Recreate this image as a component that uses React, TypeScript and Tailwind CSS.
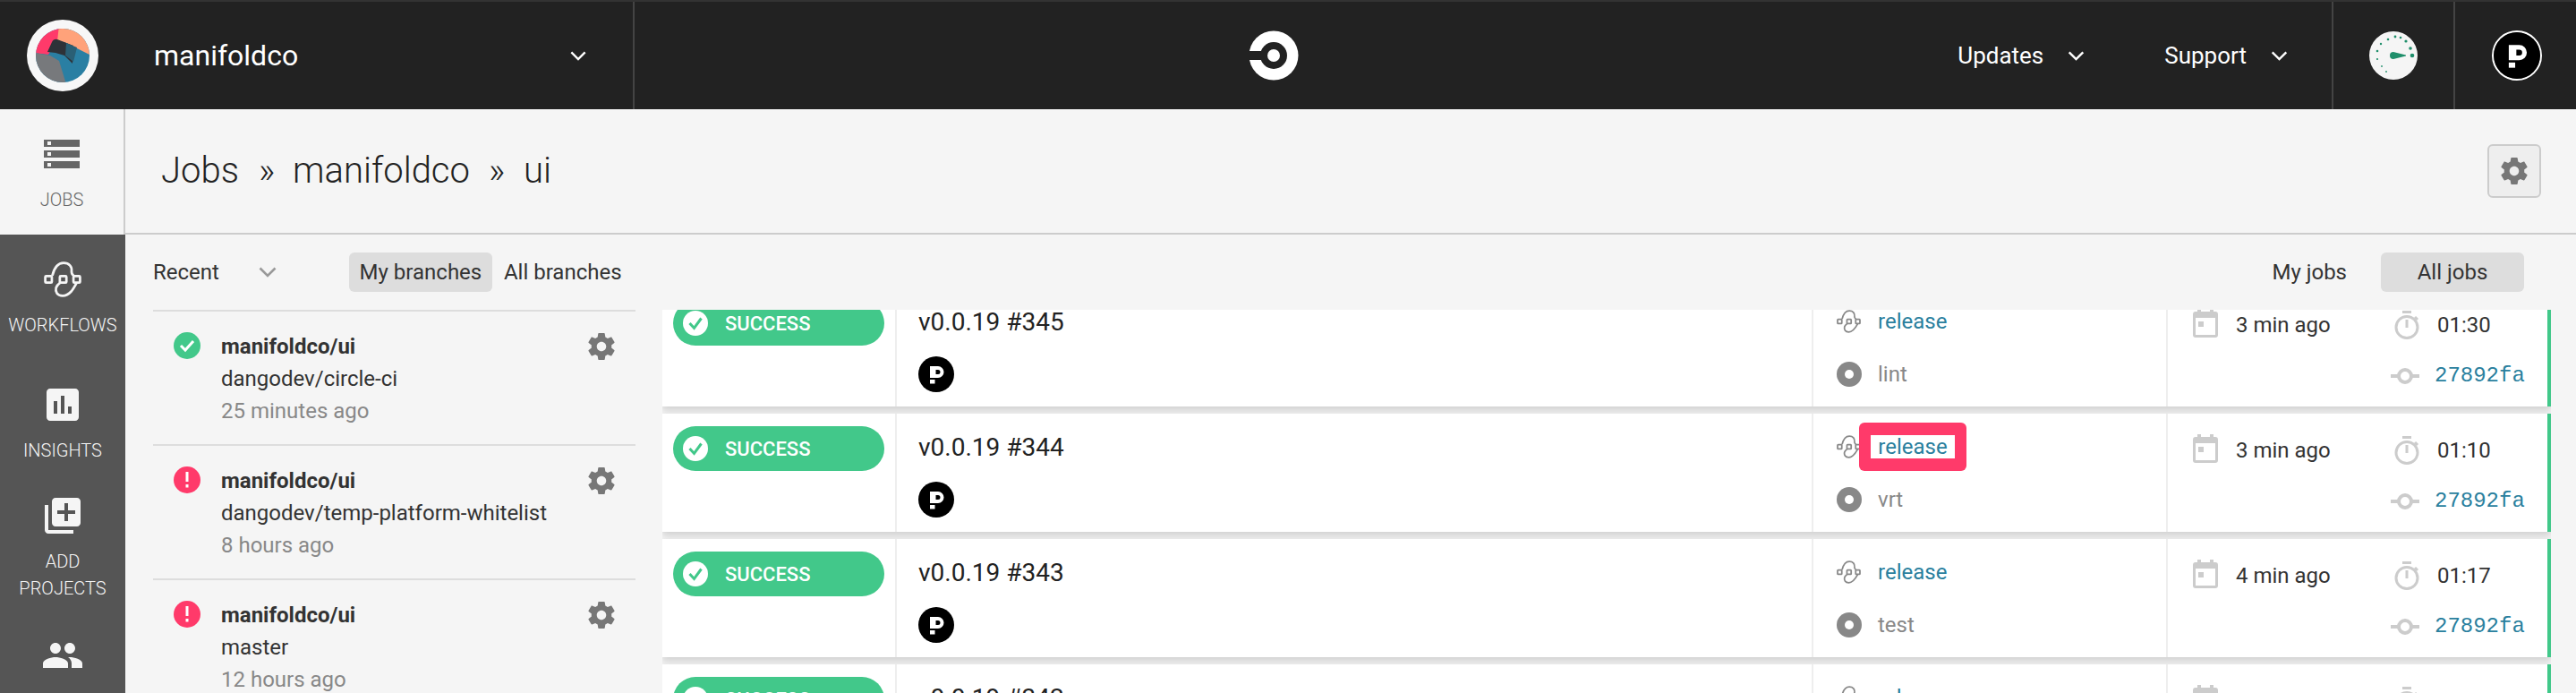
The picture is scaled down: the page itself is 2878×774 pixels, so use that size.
import type { ReactNode } from "react"

const GEAR =
  "M19.43 12.98c.04-.32.07-.64.07-.98s-.03-.66-.07-.98l2.11-1.65c.19-.15.24-.42.12-.64l-2-3.46c-.12-.22-.39-.3-.61-.22l-2.49 1c-.52-.4-1.08-.73-1.69-.98l-.38-2.65C14.46 2.18 14.25 2 14 2h-4c-.25 0-.46.18-.49.42l-.38 2.65c-.61.25-1.17.59-1.69.98l-2.49-1c-.23-.09-.49 0-.61.22l-2 3.46c-.13.22-.07.49.12.64l2.11 1.65c-.04.32-.07.65-.07.98s.03.66.07.98l-2.11 1.65c-.19.15-.24.42-.12.64l2 3.46c.12.22.39.3.61.22l2.49-1c.52.4 1.08.73 1.69.98l.38 2.65c.03.24.24.42.49.42h4c.25 0 .46-.18.49-.42l.38-2.65c.61-.25 1.17-.59 1.69-.98l2.49 1c.23.09.49 0 .61-.22l2-3.46c.12-.22.07-.49-.12-.64l-2.11-1.65zM12 15.5c-1.93 0-3.5-1.57-3.5-3.5s1.57-3.5 3.5-3.5 3.5 1.57 3.5 3.5-1.57 3.5-3.5 3.5z"

function MaterialIcon({ d, className }: { d: string; className?: string }) {
  return (
    <svg viewBox="0 0 24 24" fill="currentColor" className={className}>
      <path d={d} />
    </svg>
  )
}

function Chevron({ className }: { className?: string }) {
  return (
    <svg viewBox="0 0 20 12" fill="none" stroke="currentColor" strokeWidth="2.6" className={className}>
      <path d="M1.5 1.5 10 10l8.5-8.5" />
    </svg>
  )
}

function WorkflowIcon({ className }: { className?: string }) {
  return (
    <svg viewBox="0 0 40 38" fill="none" stroke="currentColor" strokeWidth="2.6" className={className}>
      <path d="M9 15c1.500-6 5-13.500 12-13.500 6 0 9 4 8.500 8.500-.3 2 .5 4 2.500 5.500" />
      <path d="M35 22.500c-3 5.500-7 14-15 14-6 0-8-4.500-7-8.500.7-2.500 2.500-4 4.500-5.500" />
      <rect x="1.500" y="15.500" width="7" height="7" rx="1" />
      <rect x="17" y="15.500" width="7" height="7" rx="1" />
      <rect x="31.500" y="15.500" width="7" height="7" rx="1" />
    </svg>
  )
}

function Avatar({ className }: { className?: string }) {
  return (
    <svg viewBox="0 0 40 40" className={className}>
      <circle cx="20" cy="20" r="20" fill="#000" />
      <path
        fillRule="evenodd"
        fill="#fff"
        d="M13 11h9a6.500 6.500 0 0 1 0 13h-9zM19.500 15v5h2.500a2.500 2.500 0 0 0 0-5z"
      />
      <rect x="13" y="26" width="5.500" height="4.500" fill="#fff" />
    </svg>
  )
}

function SideItem({
  icon,
  label,
  className,
  labelClass,
}: {
  icon: ReactNode
  label: ReactNode
  className: string
  labelClass: string
}) {
  return (
    <div className={className}>
      {icon}
      <div className={labelClass}>{label}</div>
    </div>
  )
}

function TopBar() {
  return (
    <header className="flex h-[122px] items-stretch border-t-2 border-[#333] bg-[#222] text-white">
      <div className="flex w-[140px] items-center justify-center">
        <svg viewBox="0 0 80 80" className="h-[80px] w-[80px]">
          <defs>
            <clipPath id="org">
              <circle cx="40" cy="40" r="30" />
            </clipPath>
          </defs>
          <circle cx="40" cy="40" r="40" fill="#f7f7f7" />
          <g clipPath="url(#org)">
            <rect width="80" height="80" fill="#2a7fa3" />
            <path d="M8 8h34v14L27 34l-3 5-16-2z" fill="#ff3a6a" />
            <path d="M36 6h40v36L42 25l-8-1z" fill="#ffa27a" />
            <path d="M8 37l18 3 10 6 8 26H8z" fill="#77797c" />
            <path d="M28 25q2-4 6-3l18 7-1 20-9-9-10-3-9-1z" fill="#2e3238" />
            <path d="M44 26l12 5-4 16-9-7z" fill="#2a5f75" />
          </g>
        </svg>
      </div>
      <div className="flex w-[569px] items-center justify-between border-r-2 border-[#444] pl-[32px] pr-[52px]">
        <span className="text-[32px] font-normal">manifoldco</span>
        <Chevron className="h-[11px] w-[18px]" />
      </div>
      <div className="flex flex-1 items-center">
        <div className="ml-[686px]">
          <svg viewBox="0 0 56 56" className="h-[56px] w-[56px]">
            <circle cx="28" cy="28" r="27.500" fill="#fff" />
            <rect x="0" y="23" width="16" height="10" fill="#222" />
            <circle cx="28" cy="28" r="15" fill="#222" />
            <circle cx="28" cy="28" r="7" fill="#fff" />
          </svg>
        </div>
        <div className="ml-auto flex items-center pr-[49px] text-[26px]">
          <span>Updates</span>
          <Chevron className="ml-[27px] h-[11px] w-[19px]" />
          <span className="ml-[89px]">Support</span>
          <Chevron className="ml-[27px] h-[11px] w-[19px]" />
        </div>
      </div>
      <div className="flex w-[138px] items-center justify-center border-x-2 border-[#444]">
        <svg viewBox="0 0 54 54" className="h-[54px] w-[54px]">
          <circle cx="27" cy="27" r="27" fill="#f5f5f5" />
          <g fill="#1f8f6b">
            <circle cx="9" cy="22" r="1.300" />
            <circle cx="9" cy="31" r="1.100" />
            <circle cx="13" cy="14" r="1.200" />
            <circle cx="21" cy="9" r="1.300" />
            <circle cx="29" cy="6" r="1.400" />
            <circle cx="35" cy="7" r="1.300" />
            <circle cx="41" cy="11" r="1.600" />
            <circle cx="46" cy="19" r="1.800" />
            <circle cx="48" cy="27" r="2.300" />
            <circle cx="14" cy="39" r="0.900" />
            <circle cx="19" cy="45" r="0.900" />
            <path d="M27 23a4 4 0 0 0 0 8l14-3.500v-1z" />
          </g>
        </svg>
      </div>
      <div className="flex w-[135px] items-center justify-center pl-[2px]">
        <Avatar className="h-[56px] w-[56px] rounded-full border-2 border-white" />
      </div>
    </header>
  )
}

function Sidebar() {
  return (
    <aside className="flex h-[652px] w-[140px] shrink-0 flex-col bg-[#555]">
      <div className="flex h-[140px] flex-col items-center border-r-2 border-[#ccc] bg-[#f5f5f5] pt-[26px]">
        <SideItem
          className="flex flex-col items-center text-[#666]"
          labelClass="mt-[12px] text-center text-[20px] leading-[30px] font-light"
          label="JOBS"
          icon={
            <MaterialIcon
              className="h-[48px] w-[48px]"
              d="M2 20h20v-4H2v4zm2-3h2v2H4v-2zM2 4v4h20V4H2zm4 3H4V5h2v2zm-4 7h20v-4H2v4zm2-3h2v2H4v-2z"
            />
          }
        />
      </div>
      <div className="flex flex-col items-center pt-[30px] text-[#f5f5f5]">
        <SideItem
          className="flex flex-col items-center"
          labelClass="mt-[16px] text-center text-[20px] leading-[30px] font-light"
          label="WORKFLOWS"
          icon={<WorkflowIcon className="h-[40px] w-[42px]" />}
        />
        <SideItem
          className="mt-[50px] flex flex-col items-center"
          labelClass="mt-[12px] text-center text-[20px] leading-[30px] font-light"
          label="INSIGHTS"
          icon={
            <MaterialIcon
              className="h-[48px] w-[48px]"
              d="M19 3H5c-1.100 0-2 .9-2 2v14c0 1.100.9 2 2 2h14c1.100 0 2-.9 2-2V5c0-1.100-.9-2-2-2zM9 17H7v-7h2v7zm4 0h-2V7h2v10zm4 0h-2v-4h2v4z"
            />
          }
        />
        <SideItem
          className="mt-[34px] flex flex-col items-center"
          labelClass="mt-[12px] text-center text-[20px] leading-[30px] font-light"
          label={
            <>
              ADD
              <br />
              PROJECTS
            </>
          }
          icon={
            <MaterialIcon
              className="h-[48px] w-[48px]"
              d="M4 6H2v14c0 1.100.9 2 2 2h14v-2H4V6zm16-4H8c-1.100 0-2 .9-2 2v12c0 1.100.9 2 2 2h12c1.100 0 2-.9 2-2V4c0-1.100-.9-2-2-2zm-1 9h-4v4h-2v-4H9V9h4V5h2v4h4v2z"
            />
          }
        />
        <MaterialIcon
          className="mt-[36px] h-[48px] w-[48px]"
          d="M16 11c1.660 0 2.990-1.340 2.990-3S17.660 5 16 5c-1.660 0-3 1.340-3 3s1.340 3 3 3zm-8 0c1.660 0 2.990-1.340 2.990-3S9.660 5 8 5C6.340 5 5 6.340 5 8s1.340 3 3 3zm0 2c-2.330 0-7 1.170-7 3.500V19h14v-2.500c0-2.330-4.670-3.500-7-3.500zm8 0c-.29 0-.62.02-.97.05 1.160.84 1.970 1.970 1.970 3.450V19h6v-2.500c0-2.330-4.670-3.500-7-3.500z"
        />
      </div>
    </aside>
  )
}

const branches = [
  { ok: true, branch: "dangodev/circle-ci", time: "25 minutes ago" },
  { ok: false, branch: "dangodev/temp-platform-whitelist", time: "8 hours ago" },
  { ok: false, branch: "master", time: "12 hours ago" },
]

function BranchPanel() {
  return (
    <div className="w-[600px] shrink-0 pl-[31px] pr-[30px]">
      <div className="flex h-[86px] items-center border-b-2 border-[#ddd] text-[24px] text-[#333]">
        <span>Recent</span>
        <Chevron className="ml-[43px] h-[12px] w-[22px] text-[#999]" />
        <span className="ml-[80px] flex h-[44px] w-[160px] items-center justify-center rounded-[6px] bg-[#ddd]">My branches</span>
        <span className="ml-[13px]">All branches</span>
      </div>
      {branches.map((b) => (
        <div key={b.branch} className="flex h-[150px] border-b-2 border-[#ddd] pl-[23px] pr-[20px] pt-[21px]">
          {b.ok ? (
            <svg viewBox="0 0 30 30" className="mt-[2px] h-[30px] w-[30px] shrink-0">
              <circle cx="15" cy="15" r="15" fill="#42c88a" />
              <path d="M8 15l5 5 9-10" fill="none" stroke="#fff" strokeWidth="3" />
            </svg>
          ) : (
            <svg viewBox="0 0 30 30" className="mt-[2px] h-[30px] w-[30px] shrink-0">
              <circle cx="15" cy="15" r="15" fill="#ff3a6a" />
              <rect x="13.500" y="6" width="3" height="11" fill="#fff" />
              <rect x="13.500" y="20" width="3" height="3.500" fill="#fff" />
            </svg>
          )}
          <div className="ml-[23px] flex-1 text-[24px] leading-[36px] text-[#333]">
            <div className="font-bold">manifoldco/ui</div>
            <div>{b.branch}</div>
            <div className="text-[#888]">{b.time}</div>
          </div>
          <MaterialIcon className="h-[36px] w-[36px] shrink-0 text-[#777]" d={GEAR} />
        </div>
      ))}
    </div>
  )
}

const jobs = [
  { build: "v0.0.19 #345", step: "lint", ago: "3 min ago", dur: "01:30" },
  { build: "v0.0.19 #344", step: "vrt", ago: "3 min ago", dur: "01:10", marked: true },
  { build: "v0.0.19 #343", step: "test", ago: "4 min ago", dur: "01:17" },
  { build: "v0.0.19 #342", step: "test", ago: "4 min ago", dur: "00:55" },
]

function JobRow({ job }: { job: (typeof jobs)[number] }) {
  return (
    <div className="flex h-[132px] shrink-0 border-r-4 border-[#42c88a] bg-white text-[24px] shadow-[0_4px_8px_rgba(0,0,0,0.16)]">
      <div className="w-[262px] shrink-0 border-r-2 border-[#eee] pl-[12px] pt-[14px]">
        <div className="flex h-[50px] w-[236px] items-center rounded-full bg-[#42c88a] pl-[11px] text-white">
          <svg viewBox="0 0 28 28" className="h-[28px] w-[28px]">
            <circle cx="14" cy="14" r="14" fill="#fff" />
            <path d="M7.500 14l5 5.500 8-11" fill="none" stroke="#42c88a" strokeWidth="3" />
          </svg>
          <span className="ml-[19px] text-[22px] font-medium">SUCCESS</span>
        </div>
      </div>
      <div className="w-[1024px] shrink-0 border-r-2 border-[#eee] pl-[24px] pt-[16px] text-[#222]">
        <div className="text-[28px] leading-[44px]">{job.build}</div>
        <Avatar className="mt-[16px] h-[40px] w-[40px]" />
      </div>
      <div className="w-[396px] shrink-0 border-r-2 border-[#eee] pl-[26px] pt-[24px]">
        <div className="flex h-[26px] items-center">
          <WorkflowIcon className="h-[26px] w-[27px] text-[#888]" />
          {job.marked ? (
            <span className="ml-[-2px] rounded-[6px] bg-[#ff3a6a] px-[13px] py-[14px] leading-none">
              <span className="flex h-[26px] w-[94px] items-center justify-center bg-white text-[#2a7f9e]">release</span>
            </span>
          ) : (
            <span className="ml-[19px] text-[#2a7f9e]">release</span>
          )}
        </div>
        <div className="mt-[32px] flex h-[28px] items-center text-[#888]">
          <svg viewBox="0 0 28 28" className="h-[28px] w-[28px]">
            <circle cx="14" cy="14" r="14" fill="#888" />
            <circle cx="14" cy="14" r="5" fill="#fff" />
          </svg>
          <span className="ml-[18px]">{job.step}</span>
        </div>
      </div>
      <div className="flex w-[253px] shrink-0 items-start pl-[28px] pt-[23px] text-[#333]">
        <svg viewBox="0 0 28 32" fill="#ccc" className="h-[32px] w-[28px]">
          <path
            fillRule="evenodd"
            d="M5 0h4v3h10V0h4v3h2a3 3 0 0 1 3 3v23a3 3 0 0 1-3 3H3a3 3 0 0 1-3-3V6a3 3 0 0 1 3-3h2zM3 10v19h22V10zM6 14h6v6H6z"
          />
        </svg>
        <span className="ml-[20px] leading-[36px]">{job.ago}</span>
      </div>
      <div className="flex-1 pt-[23px] text-[#333]">
        <div className="flex items-center">
          <svg viewBox="0 0 28 32" fill="none" stroke="#ccc" strokeWidth="3" className="h-[32px] w-[28px]">
            <circle cx="14" cy="18.500" r="12" />
            <path d="M9 1.500h10M14 10v9M23 7l3 3" />
          </svg>
          <span className="ml-[20px] leading-[36px]">{job.dur}</span>
        </div>
        <div className="-ml-[4px] mt-[21px] flex items-center">
          <svg viewBox="0 0 32 20" fill="none" stroke="#ccc" strokeWidth="4" className="h-[20px] w-[32px]">
            <circle cx="16" cy="10" r="7" />
            <path d="M0 10h9M23 10h9" />
          </svg>
          <span className="ml-[17px] font-['Liberation_Mono',monospace] text-[#2a7f9e]">27892fa</span>
        </div>
      </div>
    </div>
  )
}

function JobsPanel() {
  return (
    <div className="flex min-w-0 flex-1 flex-col pr-[28px]">
      <div className="flex h-[84px] shrink-0 items-center justify-end text-[24px] text-[#333]">
        <span className="mr-[38px]">My jobs</span>
        <span className="mr-[30px] flex h-[44px] w-[160px] items-center justify-center rounded-[6px] bg-[#ddd]">All jobs</span>
      </div>
      <div className="flex-1 overflow-hidden">
        <div className="-mt-[24px] flex flex-col gap-[8px]">
          {jobs.map((job) => (
            <JobRow key={job.build} job={job} />
          ))}
        </div>
      </div>
    </div>
  )
}

export default function App() {
  return (
    <div className="h-[774px] w-[2878px] overflow-hidden bg-[#f5f5f5] font-['Roboto',sans-serif]">
      <TopBar />
      <div className="flex">
        <Sidebar />
        <main className="flex h-[652px] min-w-0 flex-1 flex-col">
          <div className="flex h-[140px] shrink-0 items-center justify-between border-b-2 border-[#ccc] pl-[40px] pr-[39px]">
            <h1 className="flex text-[40px] font-light text-[#222]">
              <span>Jobs</span>
              <span className="ml-[22px] mr-[20px]">»</span>
              <span>manifoldco</span>
              <span className="ml-[21px] mr-[21px]">»</span>
              <span>ui</span>
            </h1>
            <button className="flex h-[60px] w-[60px] items-center justify-center rounded-[6px] border-2 border-[#ccc] bg-[#eee]">
              <MaterialIcon className="h-[36px] w-[36px] text-[#777]" d={GEAR} />
            </button>
          </div>
          <div className="flex min-h-0 flex-1">
            <BranchPanel />
            <JobsPanel />
          </div>
        </main>
      </div>
    </div>
  )
}
